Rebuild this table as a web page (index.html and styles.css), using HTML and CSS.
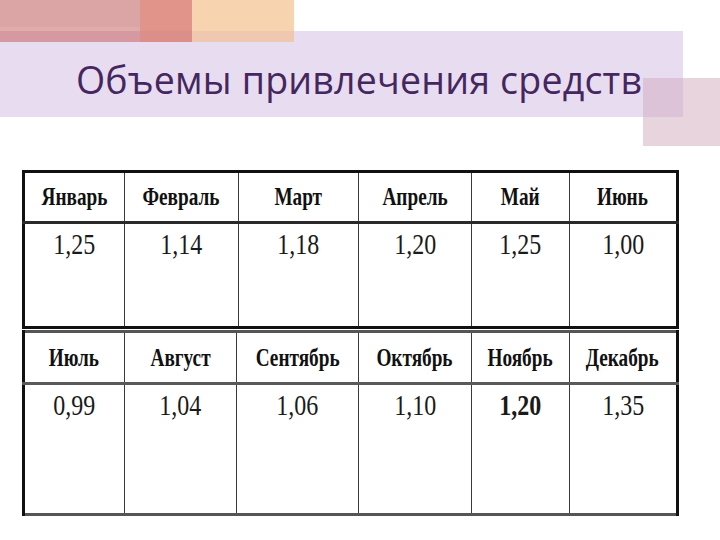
FILE: index.html
```html
<!DOCTYPE html>
<html lang="ru">
<head>
<meta charset="utf-8">
<title>Объемы привлечения средств</title>
<link rel="stylesheet" href="styles.css">
</head>
<body>
<div class="slide">
  <div class="deco deco-a"></div>
  <div class="deco deco-b"></div>
  <div class="deco deco-c"></div>
  <div class="deco deco-d"></div>
  <div class="band">
    <h1 class="title">Объемы привлечения средств</h1>
  </div>
  <div class="tables">
    <table class="grid grid-top">
      <tr class="head">
        <th class="c1"><span>Январь</span></th>
        <th class="c2"><span>Февраль</span></th>
        <th class="c3"><span>Март</span></th>
        <th class="c4"><span>Апрель</span></th>
        <th class="c5"><span>Май</span></th>
        <th class="c6"><span>Июнь</span></th>
      </tr>
      <tr class="vals">
        <td><span>1,25</span></td>
        <td><span>1,14</span></td>
        <td><span>1,18</span></td>
        <td><span>1,20</span></td>
        <td><span>1,25</span></td>
        <td><span>1,00</span></td>
      </tr>
    </table>
    <table class="grid grid-bottom">
      <tr class="head">
        <th class="c1"><span>Июль</span></th>
        <th class="c2b"><span>Август</span></th>
        <th class="c3b"><span>Сентябрь</span></th>
        <th class="c4"><span>Октябрь</span></th>
        <th class="c5"><span>Ноябрь</span></th>
        <th class="c6"><span>Декабрь</span></th>
      </tr>
      <tr class="vals">
        <td><span>0,99</span></td>
        <td><span>1,04</span></td>
        <td><span>1,06</span></td>
        <td><span>1,10</span></td>
        <td class="strong"><span>1,20</span></td>
        <td><span>1,35</span></td>
      </tr>
    </table>
  </div>
</div>
</body>
</html>
```
FILE: styles.css
```css
html, body {
  margin: 0;
  padding: 0;
  background: #ffffff;
}
.slide {
  position: relative;
  width: 720px;
  height: 540px;
  overflow: hidden;
  background: #ffffff;
}
.deco {
  position: absolute;
  top: 0;
  height: 42px;
}
.deco-a {
  left: 0;
  width: 140px;
  background: linear-gradient(#dba5a5 0, #dba5a5 27px, #e0abab 27px, #e0abab 31px, #d699a2 31px);
  z-index: 2;
}
.deco-b {
  left: 140px;
  width: 52px;
  background: linear-gradient(#e0948a 0, #e0948a 31px, #dc8e88 31px);
  z-index: 2;
}
.deco-c {
  left: 192px;
  width: 102px;
  background: linear-gradient(#f8d3b0 0, #f8d3b0 31px, #f0c8b0 31px);
  z-index: 2;
}
.deco-d {
  left: 643px;
  top: 78px;
  width: 77px;
  height: 68px;
  background: #e8d4dc;
  z-index: 1;
}
.deco-d::before {
  content: "";
  position: absolute;
  left: 0;
  top: 0;
  width: 40px;
  height: 39px;
  background: #dcc3d8;
}
.band {
  margin-top: 31px;
  width: 683px;
  height: 86px;
  background: #e8dcf0;
  display: flex;
  align-items: center;
  box-sizing: border-box;
  padding-left: 76px;
  padding-top: 10px;
}
.title {
  margin: 0;
  position: relative;
  z-index: 3;
  font-family: "Open Sans", "Noto Sans", sans-serif;
  font-weight: 400;
  font-size: 37.5px;
  letter-spacing: 0.2px;
  color: #45275f;
  white-space: nowrap;
}
.tables {
  margin-top: 53px;
  margin-left: 22px;
  display: flex;
  flex-direction: column;
  gap: 1px;
}
.grid {
  border-collapse: collapse;
  table-layout: fixed;
  width: 647px;
  font-family: "Liberation Serif", "Times New Roman", serif;
  color: #111111;
}
.grid th, .grid td {
  padding: 0;
  text-align: center;
  border-left: 1.5px solid #3a3a3a;
  border-right: 1.5px solid #3a3a3a;
  white-space: nowrap;
}
.grid th:first-child, .grid td:first-child {
  border-left: 3px solid #111111;
}
.grid th:last-child, .grid td:last-child {
  border-right: 3px solid #111111;
}
.grid span {
  display: inline-block;
}
.head th span {
  transform: scaleX(0.74);
}
.vals td span {
  transform: scaleX(0.8);
}
.head th {
  font-weight: 700;
  font-size: 26px;
  vertical-align: middle;
  border-bottom: 3px solid #2a2a2a;
}
.vals td {
  font-weight: 400;
  font-size: 30px;
  vertical-align: top;
  padding-top: 3px;
  color: #1a1a1a;
}
.vals td.strong {
  font-weight: 700;
}
.grid-top {
  border-top: 3px solid #111111;
  border-bottom: 3px solid #111111;
}
.grid-top .head th { height: 48px; }
.grid-top .vals td { height: 99px; }
.grid-bottom {
  border-top: 3px solid #555555;
  border-bottom: 3px solid #555555;
}
.grid-bottom .head th { height: 49px; border-bottom-color: #5a5a5a; }
.grid-bottom .vals td { height: 125px; }
.c1 { width: 98.5px; }
.c2 { width: 113.5px; }
.c3 { width: 118.5px; }
.c2b { width: 111.5px; }
.c3b { width: 120.5px; }
.c4 { width: 112.5px; }
.c5 { width: 96.5px; }
.c6 { width: 106.5px; }
```
